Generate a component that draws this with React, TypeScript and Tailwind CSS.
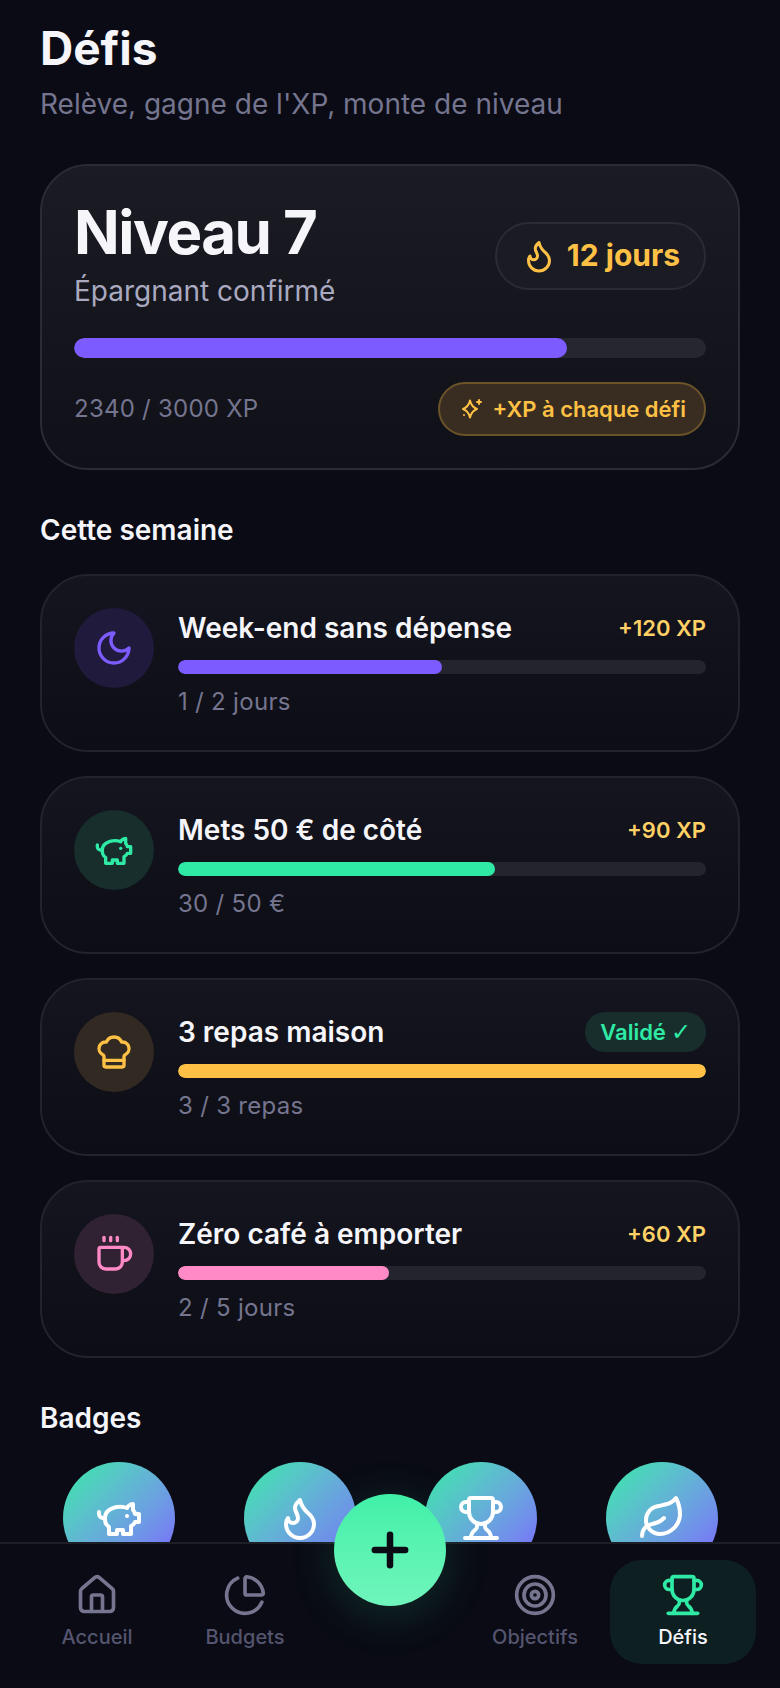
import { ChartPie, ChefHat, Coffee, Flame, House, Leaf, Plus, Target, Trophy } from 'lucide-react'
import type { ComponentType } from 'react'

type IconProps = { size?: number; strokeWidth?: number; className?: string }
type Icon = ComponentType<IconProps>

const Stroke = ({ size = 24, strokeWidth = 2, className, children }: IconProps & { children: React.ReactNode }) => (
  <svg
    width={size}
    height={size}
    viewBox="0 0 24 24"
    fill="none"
    stroke="currentColor"
    strokeWidth={strokeWidth}
    strokeLinecap="round"
    strokeLinejoin="round"
    className={className}
  >
    {children}
  </svg>
)

const PiggyBank = (props: IconProps) => (
  <Stroke {...props}>
    <path d="M19 5c-1.5 0-2.8 1.4-3 2-3.5-1.5-11-.3-11 5 0 1.8 0 3 2 4.5V20h4v-2h3v2h4v-4c1-.5 1.7-1 2-2h2v-4h-2c0-1-.5-1.5-1-2V5z" />
    <path d="M2 9v1c0 1.1.9 2 2 2h1" />
    <path d="M16 11h.01" />
  </Stroke>
)

const Moon = (props: IconProps) => (
  <Stroke {...props}>
    <path d="M12 3a6 6 0 0 0 9 9 9 9 0 1 1-9-9Z" />
  </Stroke>
)

const Sparkle = (props: IconProps) => (
  <Stroke {...props}>
    <path d="M10 3.5Q11.5 10 17 12Q11.5 14 10 20.5Q8.5 14 3 12Q8.5 10 10 3.5Z" />
    <path d="M19 3v4" />
    <path d="M17 5h4" />
    <path d="M4 18h.01" />
  </Stroke>
)

type Challenge = {
  title: string
  icon: Icon
  reward?: string
  done?: boolean
  progress: string
  iconClass: string
  barClass: string
  width: string
}

const challenges: Challenge[] = [
  {
    title: 'Week-end sans dépense',
    icon: Moon,
    reward: '+120 XP',
    progress: '1 / 2 jours',
    iconClass: 'bg-[#201a3c] text-[#7c5cff]',
    barClass: 'bg-[#7c5cff]',
    width: 'w-1/2',
  },
  {
    title: 'Mets 50 € de côté',
    icon: PiggyBank,
    reward: '+90 XP',
    progress: '30 / 50 €',
    iconClass: 'bg-[#172e2c] text-[#2eeaa5]',
    barClass: 'bg-[#2eeaa5]',
    width: 'w-3/5',
  },
  {
    title: '3 repas maison',
    icon: ChefHat,
    done: true,
    progress: '3 / 3 repas',
    iconClass: 'bg-[#322a22] text-[#ffc145]',
    barClass: 'bg-[#ffc145]',
    width: 'w-full',
  },
  {
    title: 'Zéro café à emporter',
    icon: Coffee,
    reward: '+60 XP',
    progress: '2 / 5 jours',
    iconClass: 'bg-[#302232] text-[#ff8ac6]',
    barClass: 'bg-[#ff8ac6]',
    width: 'w-2/5',
  },
]

const badges: Icon[] = [PiggyBank, Flame, Trophy, Leaf]

const NavItem = ({ icon: NavIcon, label, active }: { icon: Icon; label: string; active?: boolean }) => (
  <div
    className={`flex h-[104px] flex-col items-center justify-center gap-[6px] rounded-[32px] ${active ? 'bg-[#0e1f22]' : ''}`}
  >
    <NavIcon size={44} strokeWidth={2} className={active ? 'text-[#2eeaa5]' : 'text-[#75758f]'} />
    <span className={`text-[20px] leading-[28px] font-medium ${active ? 'text-[#f5f5fa]' : 'text-[#55556f]'}`}>
      {label}
    </span>
  </div>
)

const App = () => {
  return (
    <div className="relative h-[1688px] overflow-hidden bg-[#0a0b14] font-['Inter',sans-serif] text-[#f5f5fa]">
      <div className="px-10 pt-6">
        <h1 className="text-[46px] leading-[48px] font-bold">Défis</h1>
        <p className="mt-[12px] text-[28px] leading-[40px] text-[#75758f]">Relève, gagne de l'XP, monte de niveau</p>

        <section className="mt-[40px] h-[306px] rounded-[48px] border-2 border-[#2a2b33] bg-gradient-to-b from-[#1a1b23] to-[#0f1018] px-[32px] pt-[32px]">
          <div className="flex items-center justify-between">
            <div>
              <div className="text-[60px] leading-[68px] font-bold tracking-[-1.5px]">Niveau 7</div>
              <div className="mt-[6px] text-[28px] leading-[38px] text-[#a9a9c0]">Épargnant confirmé</div>
            </div>
            <div className="mt-[3px] flex h-[68px] items-center gap-[10px] rounded-full border-2 border-[#2a2b33] bg-[#1a1b23] px-[24px]">
              <Flame size={36} strokeWidth={2} className="text-[#ffc145]" />
              <span className="text-[30px] font-bold text-[#ffc145]">12 jours</span>
            </div>
          </div>
          <div className="mt-[28px] h-5 overflow-hidden rounded-full bg-[#25262f]">
            <div className="h-full w-[78%] rounded-full bg-[#7c5cff]" />
          </div>
          <div className="mt-[24px] flex items-center justify-between">
            <span className="text-[24px] tracking-[0.24px] text-[#75758f]">2340 / 3000 XP</span>
            <div className="flex h-[54px] items-center gap-[8px] rounded-full border-2 border-[#6b5428] bg-[#382d20] pr-[18px] pl-[20px]">
              <Sparkle size={24} strokeWidth={2} className="text-[#ffc145]" />
              <span className="text-[22px] font-semibold text-[#ffc145]">+XP à chaque défi</span>
            </div>
          </div>
        </section>

        <h2 className="mt-[41px] text-[28px] leading-[38px] font-semibold">Cette semaine</h2>

        <div className="mt-[25px] flex flex-col gap-[24px]">
          {challenges.map((c) => (
            <article
              key={c.title}
              className="flex h-[178px] gap-[24px] rounded-[48px] border-2 border-[#22232b] bg-gradient-to-b from-[#14151e] to-[#0c0d15] px-[32px] pt-[32px]"
            >
              <div className={`flex size-20 shrink-0 items-center justify-center rounded-full ${c.iconClass}`}>
                <c.icon size={40} strokeWidth={2} />
              </div>
              <div className="min-w-0 flex-1">
                <div className="flex h-[40px] items-center justify-between">
                  <span className="text-[28px] font-semibold">{c.title}</span>
                  {c.done ? (
                    <span className="flex gap-[5px] rounded-full bg-[#172e2c] px-[15px] py-[4px] text-[22px] leading-[32px] font-semibold text-[#2eeaa5]">
                      Validé <span className="font-['DejaVu_Sans',sans-serif] text-[24px] font-bold">✓</span>
                    </span>
                  ) : (
                    <span className="text-[22px] font-semibold text-[#ffd166]">{c.reward}</span>
                  )}
                </div>
                <div className="mt-[12px] h-[14px] overflow-hidden rounded-full bg-[#23242d]">
                  <div className={`h-full rounded-full ${c.width} ${c.barClass}`} />
                </div>
                <div className="mt-[12px] text-[24px] leading-[32px] tracking-[0.3px] text-[#75758f]">{c.progress}</div>
              </div>
            </article>
          ))}
        </div>

        <h2 className="mt-[41px] text-[28px] leading-[38px] font-semibold">Badges</h2>

        <div className="mt-[25px] grid grid-cols-4 gap-6">
          {badges.map((BadgeIcon, i) => (
            <div key={i} className="flex justify-center">
              <div className="flex size-28 items-center justify-center rounded-full bg-gradient-to-br from-[#2eeaa5] to-[#7c5cff] text-white">
                <BadgeIcon size={48} strokeWidth={2} />
              </div>
            </div>
          ))}
        </div>
      </div>

      <nav className="absolute inset-x-0 bottom-0 h-[146px] border-t-2 border-[#1d1e26] bg-[#0a0b14]">
        <div className="grid grid-cols-[146px_146px_1fr_146px_146px] gap-[2px] px-6 pt-[16px]">
          <NavItem icon={House} label="Accueil" />
          <NavItem icon={ChartPie} label="Budgets" />
          <div />
          <NavItem icon={Target} label="Objectifs" />
          <NavItem icon={Trophy} label="Défis" active />
        </div>
      </nav>

      <button className="absolute bottom-[82px] left-1/2 flex size-28 -translate-x-1/2 items-center justify-center rounded-full bg-gradient-to-b from-[#3ff0a8] to-[#6ff5bc] text-[#0a0b14] shadow-[0_8px_48px_rgba(46,234,165,0.16)]">
        <Plus size={52} strokeWidth={3} />
      </button>
    </div>
  )
}

export default App
